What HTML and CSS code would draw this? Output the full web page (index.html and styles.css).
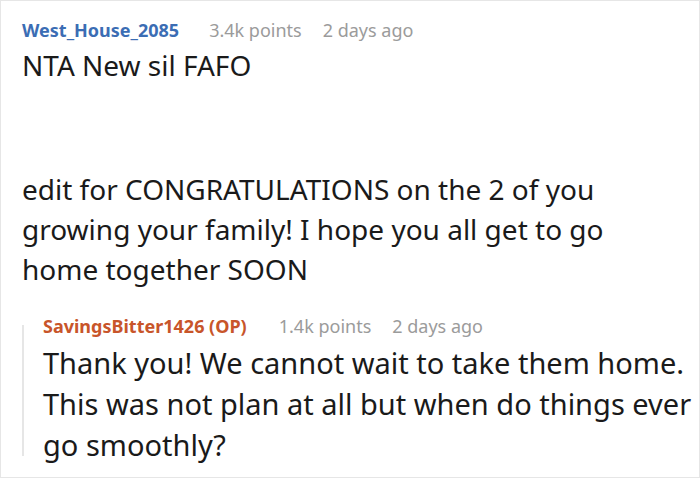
FILE: index.html
```html
<!DOCTYPE html>
<html>
<head>
<meta charset="utf-8">
<link rel="stylesheet" href="styles.css">
</head>
<body>
<div class="frame">
  <div class="comment">
    <div class="meta">
      <span class="author author-blue">West_House_2085</span>
      <span class="points">3.4k points</span>
      <span class="time">2 days ago</span>
    </div>
    <p class="text first">NTA New sil FAFO</p>
    <p class="text second">edit for CONGRATULATIONS on the 2 of you<br>growing your family! I hope you all get to go<br>home together SOON</p>
  </div>
  <div class="reply">
    <div class="rail"></div>
    <div class="reply-body">
      <div class="meta">
        <span class="author author-orange">SavingsBitter1426 (OP)</span>
        <span class="points">1.4k points</span>
        <span class="time">2 days ago</span>
      </div>
      <p class="text reply-text">Thank you! We cannot wait to take them home.<br>This was not plan at all but when do things ever<br>go smoothly?</p>
    </div>
  </div>
</div>
</body>
</html>
```

FILE: styles.css
```css
html, body {
  margin: 0;
  padding: 0;
  background: #ffffff;
}

.frame {
  box-sizing: border-box;
  width: 700px;
  height: 478px;
  border: 1px solid #e6e6e6;
  padding: 17px 0 0 21px;
  font-family: "Noto Sans", "Open Sans", sans-serif;
  color: #1a1a1a;
  overflow: hidden;
}

.meta {
  display: flex;
  align-items: baseline;
  font-size: 18px;
  line-height: 24px;
  height: 24px;
  white-space: nowrap;
}

.author {
  font-weight: 700;
  margin-right: 30px;
}

.author-blue {
  color: #3b6db4;
}

.author-orange {
  color: #c8552a;
  margin-right: 32px;
}

.points {
  color: #9b9b9b;
  margin-right: 21px;
}

.time {
  color: #9b9b9b;
}

.text {
  margin: 0;
  font-size: 28px;
  white-space: nowrap;
}

.first {
  margin-top: 3px;
  line-height: 40px;
}

.second {
  margin-top: 84px;
  line-height: 40px;
}

.reply {
  display: flex;
  margin-top: 25px;
}

.rail {
  width: 2px;
  flex: 0 0 2px;
  background: #e6e6e6;
  margin-top: 11px;
  margin-bottom: 9px;
}

.reply-body {
  padding-left: 19px;
}

.reply-text {
  margin-top: 4px;
  font-size: 29px;
  line-height: 41px;
}
```
